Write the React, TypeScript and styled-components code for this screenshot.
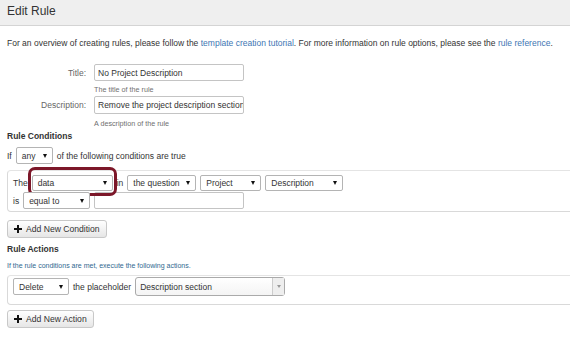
import React from 'react';
import styled, { createGlobalStyle } from 'styled-components';

const GlobalStyle = createGlobalStyle`
  html, body {
    margin: 0;
    padding: 0;
    overflow: hidden;
    background: #fff;
  }
  body {
    font-family: "Liberation Sans", Arial, sans-serif;
    font-size: 8.5px;
    color: #333;
  }
`;

const Page = styled.div`
  width: 570px;
  height: 340px;
  overflow: hidden;
`;

const Header = styled.div`
  height: 26px;
  box-sizing: border-box;
  background: #efefef;
  border-bottom: 1px solid #d4d4d4;
  padding: 4px 7px 0;
  font-size: 12px;
  line-height: 14px;
  color: #333;
`;

const Body = styled.div`
  padding: 0 7px;
`;

const Intro = styled.p`
  margin: 11px 0 0;
  line-height: 12px;
  white-space: nowrap;
`;

const Link = styled.a`
  color: #3d76b3;
  text-decoration: none;
`;

const FormRow = styled.div<{ $top: number }>`
  display: flex;
  align-items: center;
  gap: 8px;
  margin-top: ${p => p.$top}px;
`;

const Label = styled.label`
  width: 79px;
  text-align: right;
  color: #666;
`;

const TextInput = styled.div<{ $w: number; $h?: number }>`
  box-sizing: border-box;
  width: ${p => p.$w}px;
  height: ${p => p.$h ?? 17}px;
  border: 1px solid #c4c4c4;
  border-radius: 2px;
  background: #fff;
  padding: 0 3px;
  display: flex;
  align-items: center;
  white-space: nowrap;
  overflow: hidden;
  color: #333;
`;

const Hint = styled.div<{ $top: number }>`
  margin: ${p => p.$top}px 0 0 87px;
  font-size: 7.2px;
  line-height: 10px;
  color: #6f6f6f;
`;

const SectionTitle = styled.h4<{ $top: number }>`
  margin: ${p => p.$top}px 0 0;
  font-size: 8.5px;
  line-height: 12px;
  font-weight: bold;
  color: #333;
`;

const Row = styled.div<{ $top?: number }>`
  display: flex;
  align-items: center;
  gap: 4px;
  margin-top: ${p => p.$top ?? 0}px;
`;

const SelectBox = styled.div<{ $w: number; $h?: number }>`
  position: relative;
  box-sizing: border-box;
  width: ${p => p.$w}px;
  height: ${p => p.$h ?? 17}px;
  border: 1px solid #b4b4b4;
  border-radius: 2px;
  background: #fff;
  padding: 0 0 0 5px;
  display: flex;
  align-items: center;
  white-space: nowrap;
  color: #333;

  &::after {
    content: '';
    position: absolute;
    right: 5px;
    top: 50%;
    margin-top: -2px;
    border-left: 2.5px solid transparent;
    border-right: 2.5px solid transparent;
    border-top: 4px solid #111;
  }
`;

const ComboBox = styled.div<{ $w: number }>`
  box-sizing: border-box;
  width: ${p => p.$w}px;
  height: 19px;
  border: 1px solid #aaa;
  border-radius: 3px;
  background: linear-gradient(#fff, #f4f4f4);
  display: flex;
  align-items: stretch;
  color: #333;
`;

const ComboText = styled.span`
  flex: 1;
  display: flex;
  align-items: center;
  padding-left: 4px;
  white-space: nowrap;
`;

const ComboArrow = styled.span`
  width: 11px;
  border-left: 1px solid #ccc;
  background: #eee;
  display: flex;
  align-items: center;
  justify-content: center;

  &::after {
    content: '';
    border-left: 2px solid transparent;
    border-right: 2px solid transparent;
    border-top: 3px solid #999;
  }
`;

const RuleBox = styled.div<{ $top: number; $pad: string }>`
  box-sizing: border-box;
  width: 620px;
  margin-top: ${p => p.$top}px;
  border: 1px solid #d9d9d9;
  border-top-color: #e4e4e4;
  border-radius: 4px;
  padding: ${p => p.$pad};
`;

const Highlight = styled.div`
  position: relative;
`;

const Ring = styled.span`
  position: absolute;
  left: -4px;
  right: -4px;
  top: -8px;
  bottom: -5px;
  border: 3px solid #7c1729;
  border-radius: 7px;
  pointer-events: none;
`;

const Button = styled.button<{ $top: number }>`
  display: flex;
  align-items: center;
  gap: 4px;
  margin-top: ${p => p.$top}px;
  height: 18px;
  box-sizing: border-box;
  padding: 0 6px;
  font-family: inherit;
  font-size: 8.6px;
  color: #333;
  background: linear-gradient(#fff, #e6e6e6);
  border: 1px solid #c8c8c8;
  border-radius: 3px;
`;

const Info = styled.div`
  margin-top: 6px;
  font-size: 7px;
  line-height: 10px;
  color: #31688f;
`;

const Plus = () => (
  <svg width="8" height="8" viewBox="0 0 8 8">
    <path d="M3 0h2v3h3v2H5v3H3V5H0V3h3z" fill="#111" />
  </svg>
);

export default function App() {
  return (
    <Page>
      <GlobalStyle />
      <Header>Edit Rule</Header>
      <Body>
        <Intro>
          For an overview of creating rules, please follow the{' '}
          <Link>template creation tutorial</Link>. For more information on rule options,
          please see the <Link>rule reference</Link>.
        </Intro>

        <FormRow $top={15}>
          <Label>Title:</Label>
          <TextInput $w={150}>No Project Description</TextInput>
        </FormRow>
        <Hint $top={4}>The title of the rule</Hint>
        <FormRow $top={1}>
          <Label>Description:</Label>
          <TextInput $w={150} $h={18}>Remove the project description section</TextInput>
        </FormRow>
        <Hint $top={5}>A description of the rule</Hint>

        <SectionTitle $top={1}>Rule Conditions</SectionTitle>
        <Row $top={5}>
          <span>If</span>
          <SelectBox $w={37}>any</SelectBox>
          <span>of the following conditions are true</span>
        </Row>

        <RuleBox $top={6} $pad="4px 5px 2px">
          <Row>
            <span>The</span>
            <Highlight>
              <SelectBox $w={81} $h={16}>data</SelectBox>
              <Ring />
            </Highlight>
            <span>in</span>
            <SelectBox $w={69} $h={16}>the question</SelectBox>
            <SelectBox $w={61} $h={16}>Project</SelectBox>
            <SelectBox $w={78} $h={16}>Description</SelectBox>
          </Row>
          <Row $top={1}>
            <span>is</span>
            <SelectBox $w={67}>equal to</SelectBox>
            <TextInput $w={150} />
          </Row>
        </RuleBox>

        <Button $top={8}>
          <Plus />
          Add New Condition
        </Button>

        <SectionTitle $top={5}>Rule Actions</SectionTitle>
        <Info>If the rule conditions are met, execute the following actions.</Info>

        <RuleBox $top={4} $pad="1px 5px 8px">
          <Row>
            <SelectBox $w={56}>Delete</SelectBox>
            <span>the placeholder</span>
            <ComboBox $w={150}>
              <ComboText>Description section</ComboText>
              <ComboArrow />
            </ComboBox>
          </Row>
        </RuleBox>

        <Button $top={5}>
          <Plus />
          Add New Action
        </Button>
      </Body>
    </Page>
  );
}
